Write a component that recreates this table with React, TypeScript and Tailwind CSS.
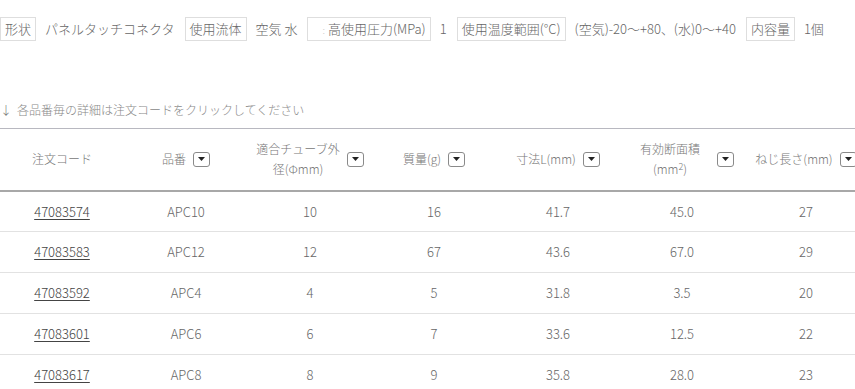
const FONT = { fontFamily: '"Noto Sans CJK JP", "Noto Sans", sans-serif' };

interface SpecItem {
  label: string;
  value: string;
  faint?: boolean;
}

const SPECS: SpecItem[] = [
  { label: "形状", value: "パネルタッチコネクタ" },
  { label: "使用流体", value: "空気 水" },
  { label: "高使用圧力(MPa)", value: "1", faint: true },
  { label: "使用温度範囲(°C)", value: "(空気)-20〜+80、(水)0〜+40" },
  { label: "内容量", value: "1個" },
];

interface Row {
  code: string;
  part: string;
  tube: string;
  mass: string;
  size: string;
  area: string;
  thread: string;
}

const ROWS: Row[] = [
  { code: "47083574", part: "APC10", tube: "10", mass: "16", size: "41.7", area: "45.0", thread: "27" },
  { code: "47083583", part: "APC12", tube: "12", mass: "67", size: "43.6", area: "67.0", thread: "29" },
  { code: "47083592", part: "APC4", tube: "4", mass: "5", size: "31.8", area: "3.5", thread: "20" },
  { code: "47083601", part: "APC6", tube: "6", mass: "7", size: "33.6", area: "12.5", thread: "22" },
  { code: "47083617", part: "APC8", tube: "8", mass: "9", size: "35.8", area: "28.0", thread: "23" },
];

function SortButton() {
  return (
    <span className="inline-flex items-center justify-center w-[17px] h-[15px] border border-[#8a8a8a] rounded-[3px] bg-white ml-[7px] shrink-0">
      <svg width="7" height="4" viewBox="0 0 7 4">
        <path d="M0 0h7L3.5 4z" fill="#222" />
      </svg>
    </span>
  );
}

function HeadCell({ children, sortable = true }: { children: React.ReactNode; sortable?: boolean }) {
  return (
    <th className="font-light text-[12px] text-[#777] py-0 px-0">
      <div className="flex items-center justify-center">
        <div className="text-center leading-[20px]">{children}</div>
        {sortable && <SortButton />}
      </div>
    </th>
  );
}

export default function App() {
  return (
    <div className="w-[855px] h-[389px] overflow-hidden bg-white text-[#666]" style={FONT}>
      <div className="flex items-center pt-[17px] text-[13px] whitespace-nowrap font-light">
        {SPECS.map((s, i) => (
          <div key={i} className="flex items-center">
            <span className="border border-[#dedede] h-[24px] flex items-center px-[4px] text-[#666] mr-[9px]">
              {s.faint && <span className="text-[#ccc] text-[10px] mr-[3px] ml-[10px]">:</span>}
              {s.label}
            </span>
            <span className="mr-[10px] text-[#666]">{s.value}</span>
          </div>
        ))}
      </div>

      <div className="mt-[57px] text-[12px] text-[#888] font-light flex items-center h-[24px]">
        <span className="mr-[5px] text-[#777]">↓</span>
        <span>各品番毎の詳細は注文コードをクリックしてください</span>
      </div>

      <table className="table-fixed border-collapse w-[868px] mt-[6px]">
        <colgroup>
          {Array.from({ length: 7 }).map((_, i) => (
            <col key={i} className="w-[124px]" />
          ))}
        </colgroup>
        <thead>
          <tr className="h-[62px] border-t border-t-[#b8b8c0] border-b-2 border-b-[#a8a8a8]">
            <HeadCell sortable={false}>注文コード</HeadCell>
            <HeadCell>品番</HeadCell>
            <HeadCell>
              適合チューブ外
              <br />
              径(Φmm)
            </HeadCell>
            <HeadCell>質量(g)</HeadCell>
            <HeadCell>寸法L(mm)</HeadCell>
            <HeadCell>
              <span className="inline-block w-[80px]">有効断面積</span>
              <br />
              (mm<sup className="text-[9px]">2</sup>)
            </HeadCell>
            <HeadCell>ねじ長さ(mm)</HeadCell>
          </tr>
        </thead>
        <tbody className="text-[13px] font-light text-[#666]">
          {ROWS.map((r) => (
            <tr key={r.code} className="h-[41px] border-b border-[#e2e2e2] text-center">
              <td>
                <span className="underline underline-offset-[2px] text-[#444]">{r.code}</span>
              </td>
              <td>{r.part}</td>
              <td>{r.tube}</td>
              <td>{r.mass}</td>
              <td>{r.size}</td>
              <td>{r.area}</td>
              <td>{r.thread}</td>
            </tr>
          ))}
        </tbody>
      </table>
    </div>
  );
}
